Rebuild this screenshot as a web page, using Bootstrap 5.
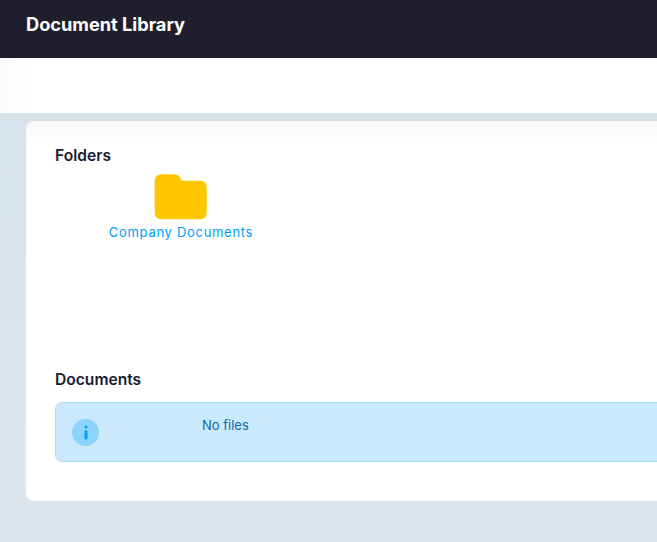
<!DOCTYPE html>
<html lang="en">
  <head>
    <meta charset="UTF-8" />
    <title>Document Library</title>
    <link
      href="https://cdn.jsdelivr.net/npm/bootstrap@5.3.3/dist/css/bootstrap.min.css"
      rel="stylesheet"
    />
    <style>
      html,
      body {
        height: 100%;
      }
      body {
        overflow: hidden;
        background: linear-gradient(180deg, #d6e2eb 0%, #dce6ee 100%);
        font-family: Inter, "Liberation Sans", sans-serif;
        color: #181c32;
      }
      .top-bar {
        height: 58px;
        padding: 0 26px;
        background: #1e1e2d;
      }
      .top-title {
        font-size: 18.2px;
        font-weight: 700;
        color: #fff;
        margin: 0 0 9px;
      }
      .tool-strip {
        height: 55px;
        background: linear-gradient(90deg, #fcfcfc 0, #fff 30px);
      }
      .lib-card {
        margin: 8px 0 0 26px;
        height: 380px;
        padding: 26px 0 0 29px;
        border: 0;
        border-radius: 8px 0 0 8px;
        background: linear-gradient(180deg, #f9f9f9 0%, #fff 24px);
      }
      .block-title {
        font-size: 15.6px;
        font-weight: 600;
        line-height: 18px;
        margin: 0;
      }
      .folder-area {
        height: 206px;
      }
      .folder-tile {
        width: 252px;
        padding-top: 9px;
        color: #009ef7;
        font-size: 13px;
        letter-spacing: 0.7px;
        line-height: 16px;
        text-decoration: none;
      }
      .folder-tile svg {
        display: block;
        margin-bottom: 2px;
      }
      .empty-note {
        height: 60px;
        margin: 13px 0 0;
        padding: 0;
        background: #cbe9fd;
        border-color: #aedff9;
        border-right: 0;
        border-radius: 7px 0 0 7px;
        color: #0b6aa2;
        font-size: 13px;
      }
      .note-icon {
        width: 27px;
        height: 27px;
        margin: 16px 0 0 16px;
        background: #8cd3fd;
      }
      .note-text {
        margin: 14px 0 0 103px;
        line-height: 16px;
      }
    </style>
  </head>
  <body>
    <header class="top-bar d-flex align-items-center">
      <h1 class="top-title">Document Library</h1>
    </header>
    <div class="tool-strip"></div>

    <main class="card lib-card">
      <h2 class="block-title">Folders</h2>
      <div class="folder-area">
        <a href="#" class="folder-tile d-flex flex-column align-items-center">
          <svg width="54" height="48" viewBox="0 0 54 48" aria-hidden="true">
            <path
              fill="#ffc700"
              d="M6.700 .3H20c2.500 0 4 .8 5.500 2.500L27.700 6.700H46.700a6 6 0 0 1 6 6V39.300a6 6 0 0 1-6 6H6.700a6 6 0 0 1-6-6V6.300a6 6 0 0 1 6-6z"
            />
          </svg>
          <span>Company Documents</span>
        </a>
      </div>

      <h2 class="block-title">Documents</h2>
      <div class="alert empty-note d-flex" role="alert">
        <span
          class="note-icon rounded-circle d-flex align-items-center justify-content-center flex-shrink-0"
        >
          <svg width="6" height="15" viewBox="0 0 6 15" aria-hidden="true">
            <circle cx="3" cy="2" r="1.500" fill="#009ef7" />
            <rect x="1.500" y="5" width="3" height="9.500" rx="1.500" fill="#009ef7" />
          </svg>
        </span>
        <span class="note-text">No files</span>
      </div>
    </main>
  </body>
</html>
